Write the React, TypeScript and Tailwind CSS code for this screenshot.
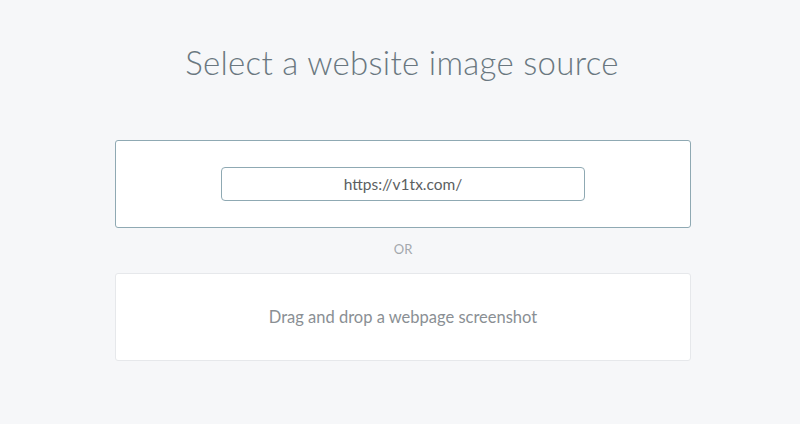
import React from "react";

const App = () => {
  return (
    <div
      className="min-h-screen w-full bg-[#f6f7f9] flex flex-col items-center pt-[40px]"
      style={{ fontFamily: "Lato, 'Open Sans', sans-serif" }}
    >
      <h1 className="ml-[4px] text-[33px] leading-[44px] font-light text-[#6a7780] tracking-[0.3px]">
        Select a website image source
      </h1>

      <div className="mt-[56px] ml-[6px] w-[576px] h-[88px] bg-white border border-[#8fa9b3] rounded-[3px] flex items-center justify-center">
        <input
          type="text"
          defaultValue="https://v1tx.com/"
          className="w-[364px] h-[34px] border border-[#8fa9b3] rounded-[4px] text-center text-[15.5px] text-[#5c5f62] outline-none bg-white"
          style={{ fontFamily: "Lato, 'Open Sans', sans-serif" }}
        />
      </div>

      <p className="mt-[12px] ml-[6px] h-[18px] text-[13px] leading-[18px] text-[#a3a8ad]">
        OR
      </p>

      <div className="mt-[15px] ml-[6px] w-[576px] h-[88px] bg-white border border-[#e6e8eb] rounded-[3px] flex items-center justify-center">
        <span className="text-[16.5px] text-[#8a8f94]">
          Drag and drop a webpage screenshot
        </span>
      </div>
    </div>
  );
};

export default App;
